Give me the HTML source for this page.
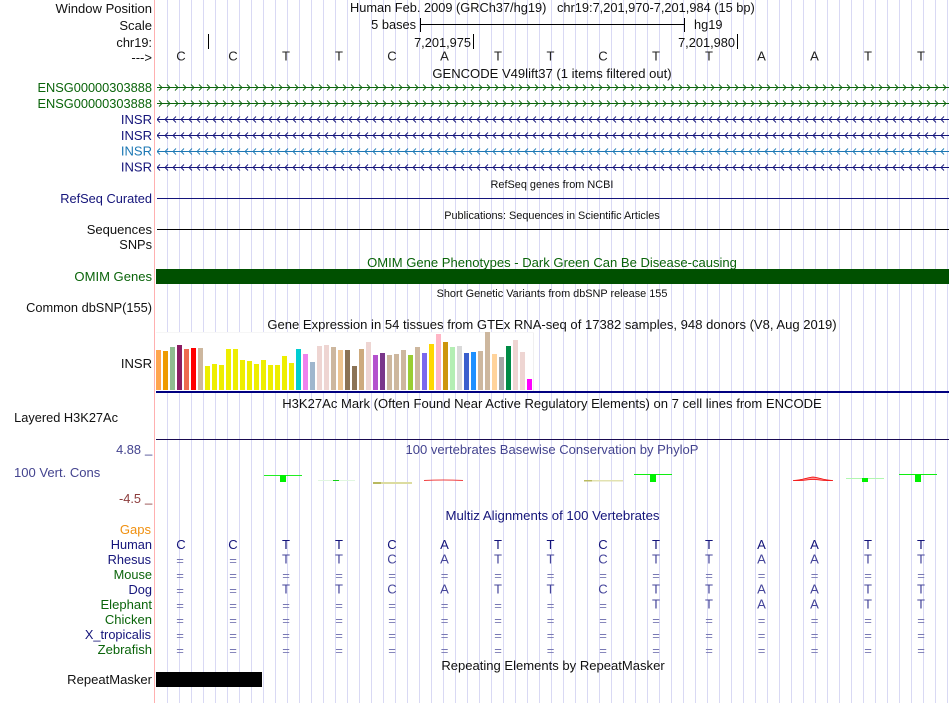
<!DOCTYPE html>
<html><head><meta charset="utf-8"><style>
html,body{margin:0;padding:0;background:#fff;width:950px;height:703px;overflow:hidden}
svg{display:block}
text{font-family:"Liberation Sans",sans-serif;font-size:13.05px;fill:#111}
.e{text-anchor:end}.m{text-anchor:middle}
text.t{font-size:12.8px}
text.s{font-size:10.9px}
.g{fill:#0a640a}.n{fill:#14147a}.l{fill:#1c78b4}.c{fill:#44448f}
.b{text-anchor:middle;fill:#222}.h{text-anchor:middle;fill:#14147a}.r{text-anchor:middle;fill:#44449a}.q{text-anchor:middle;fill:#7878b4}
</style></head><body>
<svg width="950" height="703" viewBox="0 0 950 703" xmlns="http://www.w3.org/2000/svg">
<defs>
<pattern id="v" x="167" y="0" width="12" height="703" patternUnits="userSpaceOnUse"><rect width="1" height="703" fill="#d9d9f4"/></pattern>
<pattern id="ag" x="157" y="80" width="8" height="16" patternUnits="userSpaceOnUse"><path d="M2 4.500L5 7.500L2 10.500" fill="none" stroke="#0a640a" stroke-width=".9"/></pattern>
<pattern id="an" x="157" y="80" width="8" height="16" patternUnits="userSpaceOnUse"><path d="M3 4.500L0 7.500L3 10.500" fill="none" stroke="#14147a" stroke-width=".9"/></pattern>
<pattern id="al" x="157" y="80" width="8" height="16" patternUnits="userSpaceOnUse"><path d="M3 4.500L0 7.500L3 10.500" fill="none" stroke="#1c78b4" stroke-width=".9"/></pattern>
</defs>
<rect x="167" y="0" width="783" height="703" fill="url(#v)"/>
<rect x="154" y="0" width="1" height="703" fill="#ffb0b0"/>

<!-- Header -->
<text class="e" x="152" y="13">Window Position</text>
<text class="e" x="152" y="30">Scale</text>
<text class="e t" x="152" y="47">chr19:</text>
<text class="e" x="152" y="62">---&gt;</text>
<rect x="208" y="34" width="1" height="15" fill="#000"/>
<text class="t" x="350" y="12">Human Feb. 2009 (GRCh37/hg19)</text>
<text class="t" x="557" y="12">chr19:7,201,970-7,201,984 (15 bp)</text>
<text class="e t" x="416" y="29">5 bases</text>
<rect x="420" y="18" width="1" height="14" fill="#000"/>
<rect x="420" y="24" width="265" height="1" fill="#000"/>
<rect x="684" y="18" width="1" height="14" fill="#000"/>
<text class="t" x="694" y="29">hg19</text>
<text class="e t" x="471" y="47">7,201,975</text>
<rect x="473" y="34" width="1" height="15" fill="#000"/>
<text class="e t" x="735" y="47">7,201,980</text>
<rect x="737" y="34" width="1" height="15" fill="#000"/>

<text class="b" x="181" y="60.500">C</text><text class="b" x="233" y="60.500">C</text><text class="b" x="286" y="60.500">T</text><text class="b" x="339" y="60.500">T</text><text class="b" x="392" y="60.500">C</text><text class="b" x="444.500" y="60.500">A</text><text class="b" x="498" y="60.500">T</text><text class="b" x="550.500" y="60.500">T</text><text class="b" x="603" y="60.500">C</text><text class="b" x="656" y="60.500">T</text><text class="b" x="709" y="60.500">T</text><text class="b" x="761.500" y="60.500">A</text><text class="b" x="814.500" y="60.500">A</text><text class="b" x="868" y="60.500">T</text><text class="b" x="921" y="60.500">T</text>

<text class="m" x="552" y="78">GENCODE V49lift37 (1 items filtered out)</text>

<!-- Genes -->
<text class="e g t" x="152" y="92">ENSG00000303888</text>
<text class="e g t" x="152" y="108">ENSG00000303888</text>
<text class="e n" x="152" y="124">INSR</text>
<text class="e n" x="152" y="140">INSR</text>
<text class="e l" x="152" y="155.500">INSR</text>
<text class="e n" x="152" y="171.500">INSR</text>
<rect x="157" y="87" width="792" height="1" fill="#0a640a"/>
<rect x="157" y="80" width="792" height="16" fill="url(#ag)"/>
<g transform="translate(0,16)"><rect x="157" y="87" width="792" height="1" fill="#0a640a"/><rect x="157" y="80" width="792" height="16" fill="url(#ag)"/></g>
<g transform="translate(0,32)"><rect x="157" y="87" width="792" height="1" fill="#14147a"/><rect x="157" y="80" width="792" height="16" fill="url(#an)"/></g>
<g transform="translate(0,48)"><rect x="157" y="87" width="792" height="1" fill="#14147a"/><rect x="157" y="80" width="792" height="16" fill="url(#an)"/></g>
<g transform="translate(0,64)"><rect x="157" y="87" width="792" height="1" fill="#1c78b4"/><rect x="157" y="80" width="792" height="16" fill="url(#al)"/></g>
<g transform="translate(0,80)"><rect x="157" y="87" width="792" height="1" fill="#14147a"/><rect x="157" y="80" width="792" height="16" fill="url(#an)"/></g>

<text class="m s" x="552" y="188">RefSeq genes from NCBI</text>
<text class="e n t" x="152" y="203">RefSeq Curated</text>
<rect x="157" y="198" width="792" height="1" fill="#14147a"/>
<text class="m s" x="552" y="219">Publications: Sequences in Scientific Articles</text>
<text class="e" x="152" y="234">Sequences</text>
<rect x="157" y="229" width="792" height="1" fill="#000"/>
<text class="e t" x="152" y="249">SNPs</text>
<text class="m g" x="552" y="267">OMIM Gene Phenotypes - Dark Green Can Be Disease-causing</text>
<text class="e g" x="152" y="281">OMIM Genes</text>
<rect x="156" y="269" width="793" height="15" fill="#005000"/>
<text class="m s" x="552" y="297">Short Genetic Variants from dbSNP release 155</text>
<text class="e t" x="152" y="312">Common dbSNP(155)</text>
<text class="m" x="552" y="329">Gene Expression in 54 tissues from GTEx RNA-seq of 17382 samples, 948 donors (V8, Aug 2019)</text>

<!-- GTEx -->
<text class="e" x="152" y="368">INSR</text>
<rect x="156" y="332" width="378" height="59" fill="#fff"/>
<rect x="533" y="332" width="1" height="59" fill="#f0f0f0"/>
<rect x="156" y="332" width="378" height="1" fill="#f6f6f6"/>
<g>
<rect x="156" y="350" width="5" height="40" fill="#FFA54F"/>
<rect x="163" y="351" width="5" height="39" fill="#EE9A00"/>
<rect x="170" y="347" width="5" height="43" fill="#8FBC8F"/>
<rect x="177" y="345" width="5" height="45" fill="#8B1C62"/>
<rect x="184" y="349" width="5" height="41" fill="#EE6A50"/>
<rect x="191" y="348" width="5" height="42" fill="#FF0000"/>
<rect x="198" y="348" width="5" height="42" fill="#CDB79E"/>
<rect x="205" y="366" width="5" height="24" fill="#EEEE00"/>
<rect x="212" y="364" width="5" height="26" fill="#EEEE00"/>
<rect x="219" y="365" width="5" height="25" fill="#EEEE00"/>
<rect x="226" y="349" width="5" height="41" fill="#EEEE00"/>
<rect x="233" y="349" width="5" height="41" fill="#EEEE00"/>
<rect x="240" y="360" width="5" height="30" fill="#EEEE00"/>
<rect x="247" y="361" width="5" height="29" fill="#EEEE00"/>
<rect x="254" y="364" width="5" height="26" fill="#EEEE00"/>
<rect x="261" y="360" width="5" height="30" fill="#EEEE00"/>
<rect x="268" y="365" width="5" height="25" fill="#EEEE00"/>
<rect x="275" y="365" width="5" height="25" fill="#EEEE00"/>
<rect x="282" y="356" width="5" height="34" fill="#EEEE00"/>
<rect x="289" y="363" width="5" height="27" fill="#EEEE00"/>
<rect x="296" y="349" width="5" height="41" fill="#00CED1"/>
<rect x="303" y="354" width="5" height="36" fill="#EE82EE"/>
<rect x="310" y="362" width="5" height="28" fill="#9FB6CD"/>
<rect x="317" y="346" width="5" height="44" fill="#EED5D2"/>
<rect x="324" y="345" width="5" height="45" fill="#EED5D2"/>
<rect x="331" y="347" width="5" height="43" fill="#CDB79E"/>
<rect x="338" y="350" width="5" height="40" fill="#EEC591"/>
<rect x="345" y="350" width="5" height="40" fill="#8B7355"/>
<rect x="352" y="366" width="5" height="24" fill="#8B7355"/>
<rect x="359" y="349" width="5" height="41" fill="#CDAA7D"/>
<rect x="366" y="342" width="5" height="48" fill="#EED5D2"/>
<rect x="373" y="355" width="5" height="35" fill="#B452CD"/>
<rect x="380" y="353" width="5" height="37" fill="#7A378B"/>
<rect x="387" y="355" width="5" height="35" fill="#CDB79E"/>
<rect x="394" y="354" width="5" height="36" fill="#CDB79E"/>
<rect x="401" y="350" width="5" height="40" fill="#CDB79E"/>
<rect x="408" y="355" width="5" height="35" fill="#9ACD32"/>
<rect x="415" y="347" width="5" height="43" fill="#CDB79E"/>
<rect x="422" y="353" width="5" height="37" fill="#7B68EE"/>
<rect x="429" y="344" width="5" height="46" fill="#FFD700"/>
<rect x="436" y="334" width="5" height="56" fill="#FFB5C5"/>
<rect x="443" y="342" width="5" height="48" fill="#CD950C"/>
<rect x="450" y="347" width="5" height="43" fill="#B4EEB4"/>
<rect x="457" y="346" width="5" height="44" fill="#D9D9D9"/>
<rect x="464" y="353" width="5" height="37" fill="#3A5FCD"/>
<rect x="471" y="352" width="5" height="38" fill="#1E90FF"/>
<rect x="478" y="351" width="5" height="39" fill="#CDB79E"/>
<rect x="485" y="332" width="5" height="58" fill="#CDB79E"/>
<rect x="492" y="354" width="5" height="36" fill="#FFD39B"/>
<rect x="499" y="357" width="5" height="33" fill="#A6A6A6"/>
<rect x="506" y="346" width="5" height="44" fill="#008B45"/>
<rect x="513" y="340" width="5" height="50" fill="#EED5D2"/>
<rect x="520" y="352" width="5" height="38" fill="#EED5D2"/>
<rect x="527" y="379" width="5" height="11" fill="#FF00FF"/>
</g>
<rect x="156" y="391" width="793" height="2" fill="#000080"/>

<text class="m" x="552" y="408">H3K27Ac Mark (Often Found Near Active Regulatory Elements) on 7 cell lines from ENCODE</text>
<text class="e t" x="118" y="422">Layered H3K27Ac</text>
<rect x="156" y="439" width="793" height="1" fill="#180a50"/>

<!-- Conservation -->
<text class="m c" x="552" y="454">100 vertebrates Basewise Conservation by PhyloP</text>
<text class="e c t" x="141" y="454">4.88</text><text class="c" x="145" y="453">_</text>
<text x="14" y="477" class="c">100 Vert. Cons</text>
<text class="e t" x="141" y="503" style="fill:#8c3c3c">-4.5</text><text x="145" y="502" style="fill:#8c3c3c">_</text>

<rect x="264" y="475" width="38" height="1" fill="#22ee22"/><rect x="280" y="475" width="6" height="7" fill="#00f000"/>
<rect x="318" y="480" width="37" height="1" fill="#e0f6e0"/><rect x="333" y="480" width="6" height="1" fill="#10d010"/>
<rect x="373" y="482" width="39" height="2" fill="#dcdca0"/><rect x="373" y="482" width="8" height="2" fill="#b8b860"/>
<path d="M424 480.500Q443 479.500 463 480.500" fill="none" stroke="#f04040" stroke-width="1"/>
<rect x="584" y="480" width="39" height="1.500" fill="#e2e2b0"/><rect x="584" y="480" width="8" height="1.500" fill="#baba60"/>
<rect x="634" y="474" width="38" height="1" fill="#10ee10"/><rect x="650" y="474" width="6" height="8" fill="#00f000"/>
<path d="M793 480.500C803 480 807 477.500 813 477C819 477.500 823 480 833 480.500C823 481 819 479.500 813 479.500C807 479.500 803 481 793 480.500Z" fill="#ff9090" stroke="#f00000" stroke-width=".7"/>
<rect x="846" y="478" width="38" height="1" fill="#b0f6b0"/><rect x="862" y="478" width="6" height="4" fill="#00f000"/>
<rect x="899" y="474" width="38" height="1" fill="#10ee10"/><rect x="915" y="474" width="6" height="8" fill="#00f000"/>

<text class="m n" x="552.500" y="520" style="font-size:13.2px">Multiz Alignments of 100 Vertebrates</text>
<text class="e" x="151" y="534" style="fill:#f09010">Gaps</text>
<text class="e n t" x="152" y="549">Human</text>
<text class="e n t" x="151" y="564">Rhesus</text>
<text class="e g t" x="152" y="579">Mouse</text>
<text class="e n t" x="152" y="594">Dog</text>
<text class="e g" x="152" y="609">Elephant</text>
<text class="e g" x="152" y="624">Chicken</text>
<text class="e n t" x="151" y="639">X_tropicalis</text>
<text class="e g" x="152" y="654">Zebrafish</text>

<text class="h" x="181" y="549">C</text><text class="h" x="233" y="549">C</text><text class="h" x="286" y="549">T</text><text class="h" x="339" y="549">T</text><text class="h" x="392" y="549">C</text><text class="h" x="444.500" y="549">A</text><text class="h" x="498" y="549">T</text><text class="h" x="550.500" y="549">T</text><text class="h" x="603" y="549">C</text><text class="h" x="656" y="549">T</text><text class="h" x="709" y="549">T</text><text class="h" x="761.500" y="549">A</text><text class="h" x="814.500" y="549">A</text><text class="h" x="868" y="549">T</text><text class="h" x="921" y="549">T</text>

<text class="q" x="180" y="565">=</text><text class="q" x="233" y="565">=</text><text class="r" x="286" y="563.500">T</text><text class="r" x="339" y="563.500">T</text><text class="r" x="392" y="563.500">C</text><text class="r" x="444.500" y="563.500">A</text><text class="r" x="498" y="563.500">T</text><text class="r" x="550.500" y="563.500">T</text><text class="r" x="603" y="563.500">C</text><text class="r" x="656" y="563.500">T</text><text class="r" x="709" y="563.500">T</text><text class="r" x="761.500" y="563.500">A</text><text class="r" x="814.500" y="563.500">A</text><text class="r" x="868" y="563.500">T</text><text class="r" x="921" y="563.500">T</text>

<text class="q" x="180" y="580">=</text><text class="q" x="233" y="580">=</text><text class="q" x="286" y="580">=</text><text class="q" x="339" y="580">=</text><text class="q" x="392" y="580">=</text><text class="q" x="444.500" y="580">=</text><text class="q" x="498" y="580">=</text><text class="q" x="550.500" y="580">=</text><text class="q" x="603" y="580">=</text><text class="q" x="656" y="580">=</text><text class="q" x="709" y="580">=</text><text class="q" x="761.500" y="580">=</text><text class="q" x="814.500" y="580">=</text><text class="q" x="868" y="580">=</text><text class="q" x="921" y="580">=</text>

<text class="q" x="180" y="595">=</text><text class="q" x="233" y="595">=</text><text class="r" x="286" y="593.500">T</text><text class="r" x="339" y="593.500">T</text><text class="r" x="392" y="593.500">C</text><text class="r" x="444.500" y="593.500">A</text><text class="r" x="498" y="593.500">T</text><text class="r" x="550.500" y="593.500">T</text><text class="r" x="603" y="593.500">C</text><text class="r" x="656" y="593.500">T</text><text class="r" x="709" y="593.500">T</text><text class="r" x="761.500" y="593.500">A</text><text class="r" x="814.500" y="593.500">A</text><text class="r" x="868" y="593.500">T</text><text class="r" x="921" y="593.500">T</text>

<text class="q" x="180" y="610">=</text><text class="q" x="233" y="610">=</text><text class="q" x="286" y="610">=</text><text class="q" x="339" y="610">=</text><text class="q" x="392" y="610">=</text><text class="q" x="444.500" y="610">=</text><text class="q" x="498" y="610">=</text><text class="q" x="550.500" y="610">=</text><text class="q" x="603" y="610">=</text><text class="r" x="656" y="608.500">T</text><text class="r" x="709" y="608.500">T</text><text class="r" x="761.500" y="608.500">A</text><text class="r" x="814.500" y="608.500">A</text><text class="r" x="868" y="608.500">T</text><text class="r" x="921" y="608.500">T</text>

<text class="q" x="180" y="625">=</text><text class="q" x="233" y="625">=</text><text class="q" x="286" y="625">=</text><text class="q" x="339" y="625">=</text><text class="q" x="392" y="625">=</text><text class="q" x="444.500" y="625">=</text><text class="q" x="498" y="625">=</text><text class="q" x="550.500" y="625">=</text><text class="q" x="603" y="625">=</text><text class="q" x="656" y="625">=</text><text class="q" x="709" y="625">=</text><text class="q" x="761.500" y="625">=</text><text class="q" x="814.500" y="625">=</text><text class="q" x="868" y="625">=</text><text class="q" x="921" y="625">=</text>

<text class="q" x="180" y="640">=</text><text class="q" x="233" y="640">=</text><text class="q" x="286" y="640">=</text><text class="q" x="339" y="640">=</text><text class="q" x="392" y="640">=</text><text class="q" x="444.500" y="640">=</text><text class="q" x="498" y="640">=</text><text class="q" x="550.500" y="640">=</text><text class="q" x="603" y="640">=</text><text class="q" x="656" y="640">=</text><text class="q" x="709" y="640">=</text><text class="q" x="761.500" y="640">=</text><text class="q" x="814.500" y="640">=</text><text class="q" x="868" y="640">=</text><text class="q" x="921" y="640">=</text>

<text class="q" x="180" y="655">=</text><text class="q" x="233" y="655">=</text><text class="q" x="286" y="655">=</text><text class="q" x="339" y="655">=</text><text class="q" x="392" y="655">=</text><text class="q" x="444.500" y="655">=</text><text class="q" x="498" y="655">=</text><text class="q" x="550.500" y="655">=</text><text class="q" x="603" y="655">=</text><text class="q" x="656" y="655">=</text><text class="q" x="709" y="655">=</text><text class="q" x="761.500" y="655">=</text><text class="q" x="814.500" y="655">=</text><text class="q" x="868" y="655">=</text><text class="q" x="921" y="655">=</text>

<text class="m" x="553" y="670">Repeating Elements by RepeatMasker</text>
<text class="e" x="152" y="684">RepeatMasker</text>
<rect x="156" y="672" width="106" height="15" fill="#000"/>
</svg>
</body></html>
